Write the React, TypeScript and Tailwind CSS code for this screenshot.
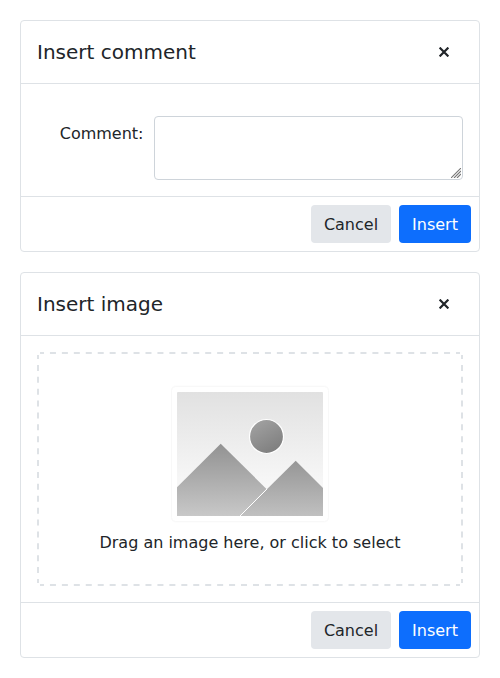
import React from "react";

const font = "font-['DejaVu_Sans',sans-serif]";

function Dialog({ title, children }: { title: string; children: React.ReactNode }) {
  return (
    <section className="w-[460px] rounded border border-[#dee2e6] bg-white">
      <header className="flex h-[63px] items-center justify-between border-b border-[#dee2e6] px-4">
        <h5 className="text-xl leading-[30px]">{title}</h5>
        <button aria-label="Close" className="mr-[14px] flex">
          <svg width="10" height="10" viewBox="0 0 10 10" stroke="#212529" strokeWidth="2.2" fill="none">
            <path d="M.6.6 9.4 9.4M9.4.6.6 9.4" />
          </svg>
        </button>
      </header>
      {children}
      <footer className="flex h-[55px] items-center justify-end gap-2 border-t border-[#dee2e6] px-2">
        <button className="h-[38px] w-20 rounded bg-[#e3e6ea] pt-px text-base text-[#212529]">Cancel</button>
        <button className="h-[38px] w-[72px] rounded bg-[#0d6efd] pt-px text-base text-white">Insert</button>
      </footer>
    </section>
  );
}

function Placeholder() {
  return (
    <svg width="160" height="140" viewBox="0 0 160 140">
      <defs>
        <linearGradient id="sky" x1="0" y1="0" x2="0" y2="1">
          <stop stopColor="#e1e1e1" />
          <stop offset="1" stopColor="#fff" />
        </linearGradient>
        <linearGradient id="hill" x1="0" y1="0" x2="0" y2="1">
          <stop stopColor="#929292" />
          <stop offset="1" stopColor="#c8c8c8" />
        </linearGradient>
        <linearGradient id="hill2" x1="0" y1="0" x2="0" y2="1">
          <stop stopColor="#969696" />
          <stop offset="1" stopColor="#c0c0c0" />
        </linearGradient>
        <linearGradient id="sun" x1="0.2" y1="0" x2="0.8" y2="1">
          <stop stopColor="#a2a2a2" />
          <stop offset="1" stopColor="#7c7c7c" />
        </linearGradient>
      </defs>
      <rect x="1" y="0" width="158" height="138" rx="5" fill="#fdfdfd" />
      <rect x="1.500" y="1.500" width="157" height="135" rx="4" fill="#fff" stroke="#f8f8f8" />
      <rect x="7" y="7" width="146" height="124" rx="1" fill="url(#sky)" />
      <path d="M7 102.300 50.700 58.700 96.500 104 70 131H7Z" fill="url(#hill)" />
      <path d="M70 131 125.700 75.700 153 103V131Z" fill="url(#hill2)" />
      <path d="M70 131 97 104" stroke="#fff" />
      <circle cx="96.500" cy="51.500" r="17" fill="url(#sun)" stroke="#fff" strokeWidth="1.200" />
    </svg>
  );
}

function DashedOutline() {
  return (
    <svg className="pointer-events-none absolute inset-0" width="426" height="234" fill="none" stroke="#dee2e6" strokeWidth="2">
      <path d="M3 1H423M3 233H423" strokeDasharray="6 5.943" strokeDashoffset="2" />
      <path d="M1 3V231M425 3V231" strokeDasharray="6 5.895" strokeDashoffset="2" />
    </svg>
  );
}

export default function App() {
  return (
    <main className={`${font} flex h-[678px] w-[500px] flex-col gap-5 bg-white p-5 text-base leading-6 text-[#212529]`}>
      <Dialog title="Insert comment">
        <div className="flex h-[112px] gap-[10.5px] px-4 pt-8">
          <label className="w-[106.5px] pt-[6px] text-right">Comment:</label>
          <div className="relative h-16 w-[309px]">
            <textarea className="h-16 w-full resize-none rounded border border-[#ced4da]" />
            <svg className="pointer-events-none absolute right-[2px] bottom-[2px]" width="10" height="10" stroke="#777" strokeWidth="1.1" fill="none">
              <path d="M0 10 10 0M3 10 10 3M6 10 10 6" />
            </svg>
          </div>
        </div>
      </Dialog>
      <Dialog title="Insert image">
        <div className="h-[266px] p-4">
          <div className="relative flex h-[234px] flex-col items-center pt-[33px]">
            <DashedOutline />
            <Placeholder />
            <p className="mt-[6px]">Drag an image here, or click to select</p>
          </div>
        </div>
      </Dialog>
    </main>
  );
}
